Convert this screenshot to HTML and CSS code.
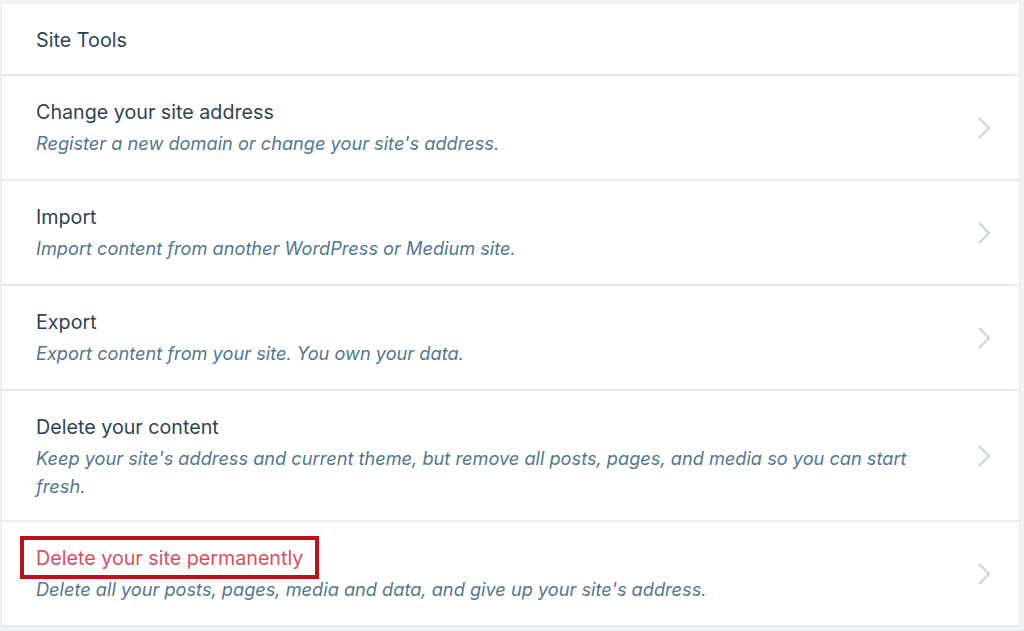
FILE: index.html
```html
<!DOCTYPE html>
<html lang="en">
<head>
    <meta charset="UTF-8">
    <meta name="viewport" content="width=device-width, initial-scale=1.0">
    <title>Site Tools</title>
    <link rel="stylesheet" href="styles.css">
</head>
<body>
    <div class="card">
        <div class="card-header">Site Tools</div>

        <a class="tool" href="#">
            <div class="tool-text">
                <div class="tool-title">Change your site address</div>
                <div class="tool-desc">Register a new domain or change your site's address.</div>
            </div>
            <svg class="chevron" width="14" height="24" viewBox="0 0 14 24"><polyline points="2,2 12,12 2,22"/></svg>
        </a>

        <a class="tool" href="#">
            <div class="tool-text">
                <div class="tool-title">Import</div>
                <div class="tool-desc">Import content from another WordPress or Medium site.</div>
            </div>
            <svg class="chevron" width="14" height="24" viewBox="0 0 14 24"><polyline points="2,2 12,12 2,22"/></svg>
        </a>

        <a class="tool" href="#">
            <div class="tool-text">
                <div class="tool-title">Export</div>
                <div class="tool-desc">Export content from your site. You own your data.</div>
            </div>
            <svg class="chevron" width="14" height="24" viewBox="0 0 14 24"><polyline points="2,2 12,12 2,22"/></svg>
        </a>

        <a class="tool tool-tall" href="#">
            <div class="tool-text">
                <div class="tool-title">Delete your content</div>
                <div class="tool-desc">Keep your site's address and current theme, but remove all posts, pages, and media so you can start fresh.</div>
            </div>
            <svg class="chevron" width="14" height="24" viewBox="0 0 14 24"><polyline points="2,2 12,12 2,22"/></svg>
        </a>

        <a class="tool" href="#">
            <div class="tool-text">
                <div class="tool-title danger"><span class="highlight">Delete your site permanently</span></div>
                <div class="tool-desc">Delete all your posts, pages, media and data, and give up your site's address.</div>
            </div>
            <svg class="chevron" width="14" height="24" viewBox="0 0 14 24"><polyline points="2,2 12,12 2,22"/></svg>
        </a>
    </div>
</body>
</html>
```

FILE: styles.css
```css
body {
    margin: 0;
    background-color: #f0f3f6;
    font-family: Inter, "Noto Sans", Arial, sans-serif;
    color: #2e4453;
}
.card {
    margin: 4px 4px 0 1px;
    background-color: #fff;
    border-left: 1px solid #e4e9ed;
    border-right: 1px solid #e4e9ed;
}
.card-header {
    height: 72px;
    box-sizing: border-box;
    padding: 2px 34px 0;
    display: flex;
    align-items: center;
    font-size: 19.8px;
    border-bottom: 2px solid #e6ebef;
}
.tool {
    display: flex;
    align-items: flex-start;
    height: 103px;
    box-sizing: content-box;
    padding: 0 28px 0 34px;
    border-bottom: 2px solid #e6ebef;
    text-decoration: none;
    color: inherit;
}
.tool-tall {
    height: 129px;
}
.tool-text {
    flex: 1;
    padding: 24px 40px 0 0;
}
.tool-title {
    font-size: 19.7px;
    line-height: 24px;
    margin-bottom: 5px;
}
.tool-desc {
    font-size: 18.2px;
    font-style: italic;
    line-height: 28px;
    color: #527790;
}
.danger {
    color: #d94f5c;
}
.highlight {
    display: inline-block;
    border: 4px solid #c0101a;
    padding: 6px 12px 5px;
    margin: -10px 0 -9px -16px;
}
.chevron {
    align-self: center;
    fill: none;
    stroke: #c8d3dc;
    stroke-width: 2;
}
```
